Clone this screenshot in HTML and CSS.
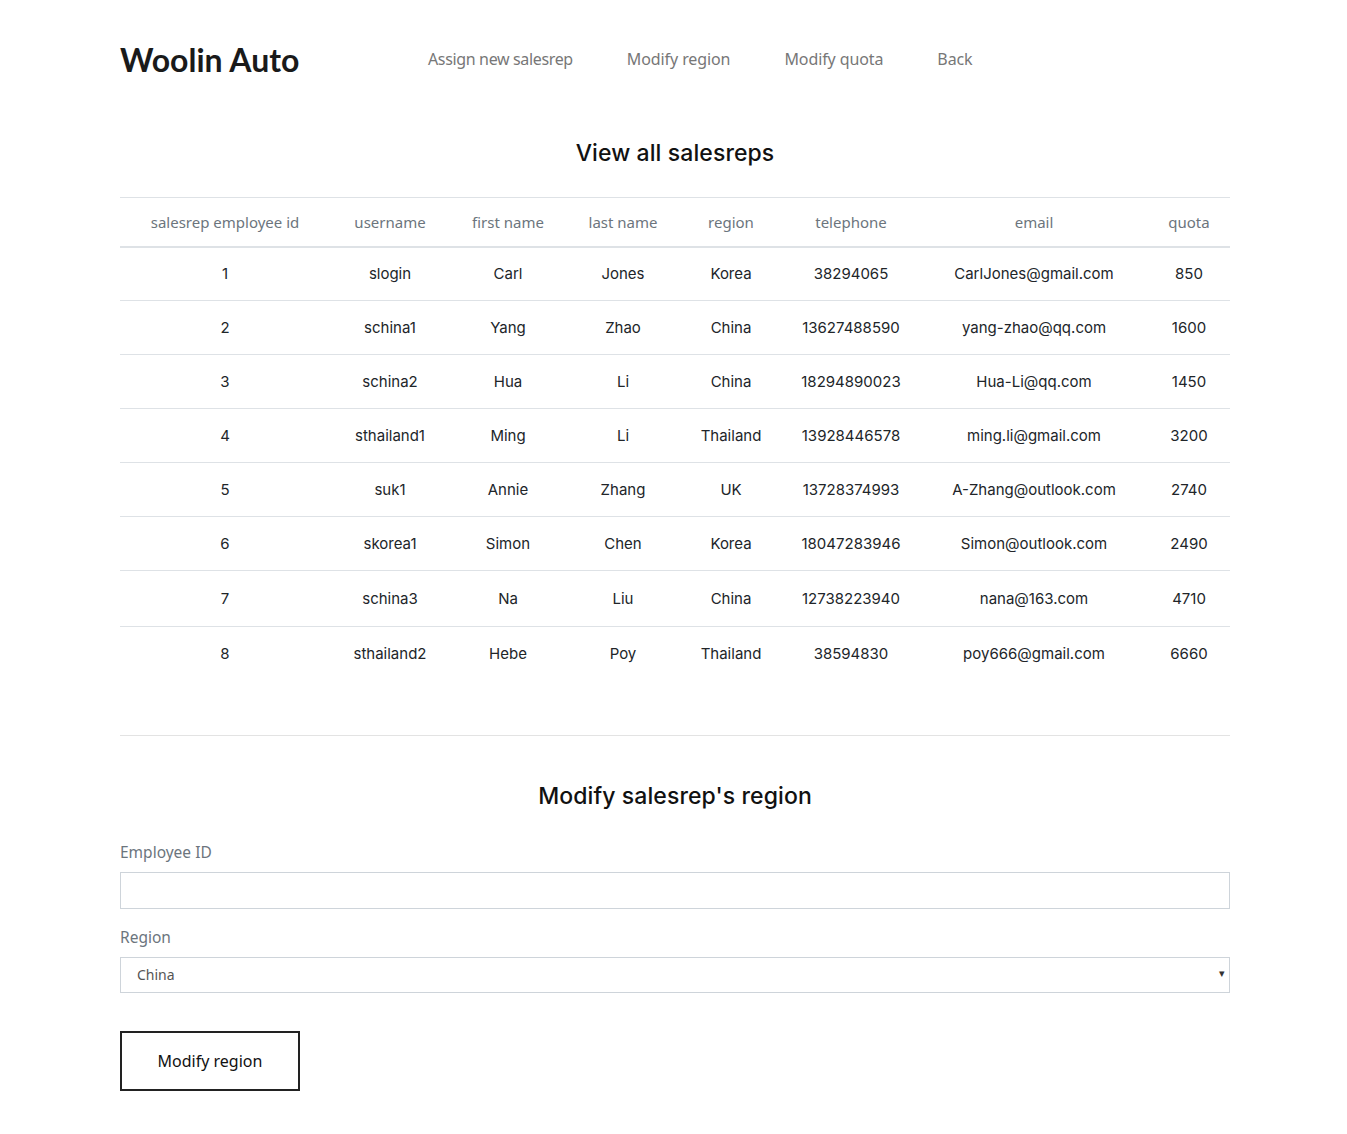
FILE: index.html
```html
<!DOCTYPE html>
<html lang="en">
<head>
<meta charset="utf-8">
<title>Woolin Auto</title>
<link rel="stylesheet" href="styles.css">
</head>
<body>
<div class="container">
  <header class="topbar">
    <div class="logo">Woolin Auto</div>
    <nav class="nav">
      <a href="#" class="nav-link nav-link-tight">Assign new salesrep</a>
      <a href="#" class="nav-link">Modify region</a>
      <a href="#" class="nav-link">Modify quota</a>
      <a href="#" class="nav-link">Back</a>
    </nav>
  </header>

  <h2 class="section-title first">View all salesreps</h2>

  <table class="reps">
    <colgroup>
      <col class="c1"><col class="c2"><col class="c3"><col class="c4">
      <col class="c5"><col class="c6"><col class="c7"><col class="c8">
    </colgroup>
    <thead>
      <tr>
        <th>salesrep employee id</th><th>username</th><th>first name</th><th>last name</th>
        <th>region</th><th>telephone</th><th>email</th><th>quota</th>
      </tr>
    </thead>
    <tbody>
      <tr><td>1</td><td>slogin</td><td>Carl</td><td>Jones</td><td>Korea</td><td>38294065</td><td>CarlJones@gmail.com</td><td>850</td></tr>
      <tr><td>2</td><td>schina1</td><td>Yang</td><td>Zhao</td><td>China</td><td>13627488590</td><td>yang-zhao@qq.com</td><td>1600</td></tr>
      <tr><td>3</td><td>schina2</td><td>Hua</td><td>Li</td><td>China</td><td>18294890023</td><td>Hua-Li@qq.com</td><td>1450</td></tr>
      <tr><td>4</td><td>sthailand1</td><td>Ming</td><td>Li</td><td>Thailand</td><td>13928446578</td><td>ming.li@gmail.com</td><td>3200</td></tr>
      <tr><td>5</td><td>suk1</td><td>Annie</td><td>Zhang</td><td>UK</td><td>13728374993</td><td>A-Zhang@outlook.com</td><td>2740</td></tr>
      <tr><td>6</td><td>skorea1</td><td>Simon</td><td>Chen</td><td>Korea</td><td>18047283946</td><td>Simon@outlook.com</td><td>2490</td></tr>
      <tr class="tall"><td>7</td><td>schina3</td><td>Na</td><td>Liu</td><td>China</td><td>12738223940</td><td>nana@163.com</td><td>4710</td></tr>
      <tr class="last"><td>8</td><td>sthailand2</td><td>Hebe</td><td>Poy</td><td>Thailand</td><td>38594830</td><td>poy666@gmail.com</td><td>6660</td></tr>
    </tbody>
  </table>

  <hr class="divider">

  <h2 class="section-title">Modify salesrep's region</h2>

  <form class="form">
    <label class="label" for="eid">Employee ID</label>
    <input class="field" id="eid" type="text">
    <label class="label" for="region">Region</label>
    <div class="select-wrap">
      <select class="field select" id="region">
        <option>China</option>
        <option>Korea</option>
        <option>Thailand</option>
        <option>UK</option>
      </select>
      <span class="caret">&#9662;</span>
    </div>
    <button type="button" class="btn">Modify region</button>
  </form>
</div>
</body>
</html>
```

FILE: styles.css
```css
* { box-sizing: border-box; }
html, body { margin: 0; padding: 0; background: #fff; }
body { font-family: "Open Sans", "Noto Sans", sans-serif; color: #212529; padding-left: 3px; }

.container { width: 1110px; margin: 0 auto; padding-bottom: 40px; }

.topbar { display: flex; align-items: center; height: 120px; padding-bottom: 2px; }
.logo { font-family: "Lato", sans-serif; font-weight: 700; font-size: 32px; color: #1a1a1a; width: 308px; }
.nav { display: flex; gap: 54px; }
.nav-link { font-family: "Noto Sans", sans-serif; font-size: 16px; letter-spacing: -0.1px; color: #777; text-decoration: none; }
.nav-link-tight { letter-spacing: -0.35px; }

.section-title { font-family: "Inter", sans-serif; font-weight: 500; font-size: 23px; color: #111; text-align: center; margin: 0; letter-spacing: 0.1px; }
.section-title.first { margin-top: 19px; margin-bottom: 30px; }

.reps { width: 1110px; border-collapse: collapse; table-layout: fixed; }
.c1 { width: 210px; } .c2 { width: 120px; } .c3 { width: 116px; } .c4 { width: 114px; }
.c5 { width: 102px; } .c6 { width: 138px; } .c7 { width: 228px; } .c8 { width: 82px; }
.reps th { font-family: "Noto Sans", sans-serif; font-weight: 400; font-size: 15px; color: #6c757d; height: 49px; border-top: 1px solid #dee2e6; border-bottom: 2px solid #dee2e6; text-align: center; padding: 0; }
.reps td { font-family: "Inter", sans-serif; font-size: 15px; color: #212529; height: 54px; text-align: center; padding: 0; border-bottom: 1px solid #dee2e6; }
.reps tr.tall td { height: 56px; }
.reps tr.last td { border-bottom: none; }

.divider { border: 0; border-top: 1px solid #e3e3e3; margin: 54px 0 46px; }

.form { display: flex; flex-direction: column; align-items: stretch; margin-top: 31px; }
.label { font-family: "Noto Sans", sans-serif; font-size: 15.5px; color: #6c757d; margin-bottom: 9px; }
.field { height: 37px; border: 1px solid #ced4da; border-radius: 0; font-family: "Noto Sans", sans-serif; font-size: 14px; color: #555; padding: 0 16px; background: #fff; margin-bottom: 17px; width: 100%; }
.select-wrap { position: relative; }
.select { appearance: none; -webkit-appearance: none; height: 36px; }
.caret { position: absolute; right: 5px; top: 8px; font-size: 11px; color: #333; pointer-events: none; }
.btn { align-self: flex-start; width: 180px; height: 60px; margin-top: 21px; background: #fff; border: 2px solid #222; font-family: "Noto Sans", sans-serif; font-size: 16px; color: #111; cursor: pointer; }
```
